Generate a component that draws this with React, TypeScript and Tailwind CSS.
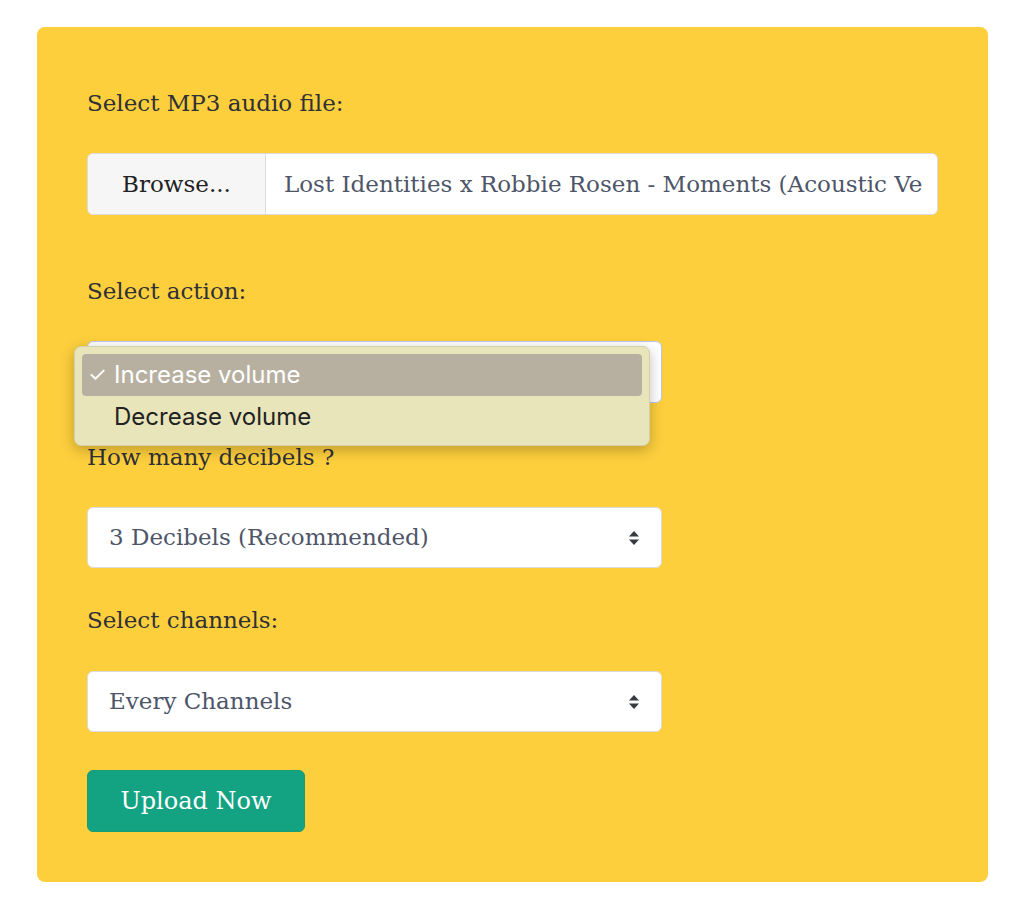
const serif = { fontFamily: '"DejaVu Serif", "Liberation Serif", serif' };

function SelectArrows() {
  return (
    <svg width="12" height="18" viewBox="0 0 12 18" className="text-[#343a40]">
      <path d="M6 2 L11 7.5 H1 Z" fill="currentColor" />
      <path d="M6 16 L11 10.5 H1 Z" fill="currentColor" />
    </svg>
  );
}

function FakeSelect({ value }: { value: string }) {
  return (
    <div className="flex h-[61px] w-[575px] items-center justify-between rounded-[6px] border border-[#dcdcdc] bg-white pl-[21px] pr-[21px]">
      <span className="text-[23px] text-[#4e5568]">{value}</span>
      <SelectArrows />
    </div>
  );
}

export default function App() {
  return (
    <div className="min-h-[913px] bg-white px-[37px] pt-[27px]" style={serif}>
      <div className="flex h-[855px] w-[951px] flex-col rounded-[8px] bg-[#fdcf3d] px-[50px] pt-[65px] text-[#2f3136]">
        <label className="text-[23px] leading-none">Select MP3 audio file:</label>

        <div className="mt-[38px] flex h-[62px] w-[851px] overflow-hidden rounded-[6px] border border-[#dcdcdc] bg-white">
          <div className="flex w-[178px] shrink-0 items-center justify-center border-r border-[#dcdcdc] bg-[#f6f6f6] text-[23px] text-[#222]">
            Browse...
          </div>
          <div className="flex min-w-0 flex-1 items-center overflow-hidden whitespace-nowrap pl-[18px] pr-[14px] text-[23px] text-[#4e5568]">
            <span className="overflow-hidden">Lost Identities x Robbie Rosen - Moments (Acoustic Version).mp3</span>
          </div>
        </div>

        <label className="mt-[65px] text-[23px] leading-none">Select action:</label>

        <div className="relative mt-[38px]">
          <div className="h-[62px] w-[575px] rounded-[6px] border border-[#b9c6ef] bg-white" />
          <div
            className="absolute left-[-13px] top-[5px] w-[576px] rounded-[7px] border border-[#d4cfa8] bg-[#e9e5bb] p-[7px] shadow-[0_4px_14px_rgba(0,0,0,0.25)]"
            style={{ fontFamily: 'Inter, "Liberation Sans", Arial, sans-serif' }}
          >
            <div className="flex h-[42px] items-center rounded-[4px] bg-[#b7b0a1] text-[24px] text-white">
              <span className="w-[32px] pl-[6px] text-[21px]">✓</span>
              <span>Increase volume</span>
            </div>
            <div className="flex h-[42px] items-center text-[24px] text-[#222]">
              <span className="w-[32px]" />
              <span>Decrease volume</span>
            </div>
          </div>
        </div>

        <label className="mt-[43px] text-[23px] leading-none">How many decibels ?</label>

        <div className="mt-[38px]">
          <FakeSelect value="3 Decibels (Recommended)" />
        </div>

        <label className="mt-[41px] text-[23px] leading-none">Select channels:</label>

        <div className="mt-[39px]">
          <FakeSelect value="Every Channels" />
        </div>

        <button className="mt-[38px] h-[62px] w-[218px] rounded-[6px] border border-[#1a9d73] bg-[#13a282] text-[24px] text-white">
          Upload Now
        </button>
      </div>
    </div>
  );
}
